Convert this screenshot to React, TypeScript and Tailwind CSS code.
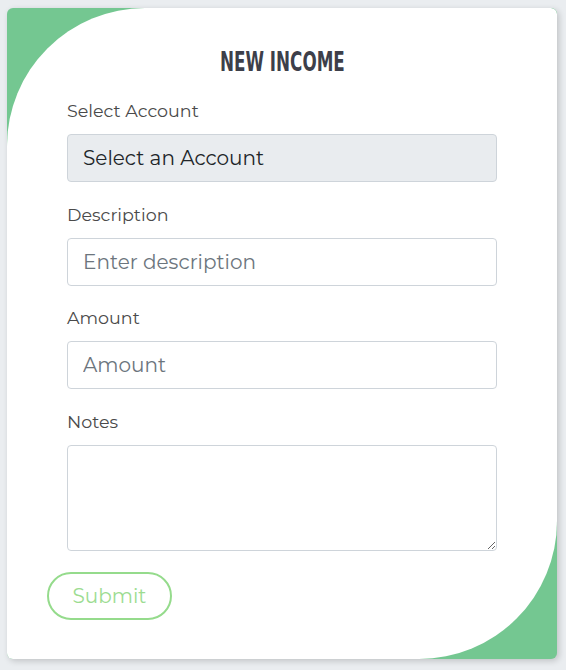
import React from "react";

const font = { fontFamily: "Montserrat, Inter, 'Open Sans', sans-serif" };

export default function App() {
  return (
    <div className="min-h-[670px] w-[566px] bg-[#eaedf0] pl-[7px] pt-[8px]" style={font}>
      <div className="relative h-[651px] w-[550px] overflow-hidden rounded-[6px] bg-[#74c791] shadow-[2px_2px_6px_rgba(0,0,0,0.18)]">
        <div className="flex h-full w-full flex-col rounded-tl-[138px] rounded-br-[138px] rounded-tr-[6px] bg-white">
          <h1
            className="mt-[37px] text-center text-[27px] font-bold leading-[34px] text-[#3d3f4a]"
            style={{ fontFamily: "'DejaVu Sans Condensed', 'Liberation Sans', sans-serif" }}
          >
            <span className="inline-block scale-x-[0.69]">NEW INCOME</span>
          </h1>
          <div className="mt-[20px] flex flex-col px-[60px]">
            <label className="h-[24px] text-[17.5px] leading-[24px] text-[#4a4a4a]">Select Account</label>
            <div className="mt-[11px] flex h-[48px] w-[430px] items-center rounded-[4px] border border-[#ced4da] bg-[#e9ecef] px-[15px] text-[20px] text-[#212529]">
              Select an Account
            </div>
            <label className="mt-[21px] h-[24px] text-[17.5px] leading-[24px] text-[#4a4a4a]">Description</label>
            <input
              className="mt-[11px] h-[48px] w-[430px] rounded-[4px] border border-[#ced4da] bg-white px-[15px] text-[20px] text-[#212529] outline-none placeholder:text-[#6c757d]"
              placeholder="Enter description"
            />
            <label className="mt-[20px] h-[24px] text-[17.5px] leading-[24px] text-[#4a4a4a]">Amount</label>
            <input
              className="mt-[11px] h-[48px] w-[430px] rounded-[4px] border border-[#ced4da] bg-white px-[15px] text-[20px] text-[#212529] outline-none placeholder:text-[#6c757d]"
              placeholder="Amount"
            />
            <label className="mt-[21px] h-[24px] text-[17.5px] leading-[24px] text-[#4a4a4a]">Notes</label>
            <textarea className="mt-[11px] h-[106px] w-[430px] rounded-[4px] border border-[#ced4da] bg-white px-[15px] text-[20px] outline-none" />
          </div>
          <div className="mt-[21px] pl-[40px]">
            <button className="h-[48px] w-[125px] rounded-full border-2 border-[#95db8c] bg-white text-[20px] text-[#9cdc91]">
              Submit
            </button>
          </div>
        </div>
      </div>
    </div>
  );
}
